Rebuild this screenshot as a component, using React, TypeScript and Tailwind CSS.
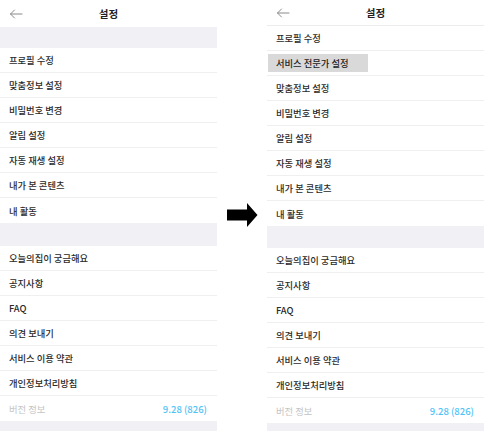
import React from "react";

const font = { fontFamily: '"Noto Sans CJK KR", "Noto Sans", sans-serif' };

function BackArrow() {
  return (
    <svg width="14" height="10" viewBox="0 0 14 10" fill="none">
      <path d="M13 5H1.5M5.5 1L1.5 5L5.5 9" stroke="#8a8a8a" strokeWidth="1" strokeLinecap="round" strokeLinejoin="round" />
    </svg>
  );
}

function Header({ border }: { border?: boolean }) {
  return (
    <div className={`grid grid-cols-[40px_1fr_40px] items-center ${border ? "h-[26px] border-b border-[#ececec]" : "h-[27px]"}`}>
      <div className="pl-[9px] pt-[1px] flex items-center">
        <BackArrow />
      </div>
      <div className="text-center text-[10.5px] font-bold text-[#222] pt-[1px]">설정</div>
      <div />
    </div>
  );
}

function Row({ label, last, highlight }: { label: string; last?: boolean; highlight?: boolean }) {
  return (
    <div className={`h-[25px] flex items-center ${last ? "" : "border-b border-[#efefef]"}`}>
      {highlight ? (
        <div className="ml-[1px] h-[18px] w-[100px] bg-[#d9d9d9] flex items-center pl-[8px] pt-[1px] text-[9.3px] font-medium text-[#222]">
          {label}
        </div>
      ) : (
        <div className="pl-[9px] pt-[2px] text-[9.3px] font-medium text-[#2a2a2a]">{label}</div>
      )}
    </div>
  );
}

function VersionRow() {
  return (
    <div className="h-[25px] flex items-center justify-between pl-[9px] pr-[10px] pt-[2px]">
      <span className="text-[9.3px] text-[#c4c4c4]">버전 정보</span>
      <span className="text-[9.5px] font-medium text-[#4fc3f7]">9.28 (826)</span>
    </div>
  );
}

const groupA = ["프로필 수정", "맞춤정보 설정", "비밀번호 변경", "알림 설정", "자동 재생 설정", "내가 본 콘텐츠", "내 활동"];
const groupB = ["오늘의집이 궁금해요", "공지사항", "FAQ", "의견 보내기", "서비스 이용 약관", "개인정보처리방침"];

function LeftPanel() {
  return (
    <div className="w-[217px] h-full flex flex-col bg-white">
      <Header />
      <div className="h-[21px] bg-[#f1f1f5]" />
      {groupA.map((l, i) => (
        <Row key={l} label={l} last={i === groupA.length - 1} />
      ))}
      <div className="h-[23px] bg-[#f1f1f5]" />
      {groupB.map((l) => (
        <Row key={l} label={l} />
      ))}
      <VersionRow />
      <div className="flex-1 bg-[#f1f1f5]" />
    </div>
  );
}

function RightPanel() {
  const items = ["프로필 수정", "서비스 전문가 설정", "맞춤정보 설정", "비밀번호 변경", "알림 설정", "자동 재생 설정", "내가 본 콘텐츠", "내 활동"];
  return (
    <div className="w-[217px] h-full flex flex-col bg-white">
      <Header border />
      {items.map((l, i) => (
        <Row key={l} label={l} highlight={i === 1} last={i === items.length - 1} />
      ))}
      <div className="h-[22px] bg-[#f1f1f5]" />
      {groupB.map((l) => (
        <Row key={l} label={l} />
      ))}
      <VersionRow />
      <div className="flex-1 bg-[#f1f1f5]" />
    </div>
  );
}

function BigArrow() {
  return (
    <svg width="31" height="24" viewBox="0 0 31 24">
      <path d="M0 6.5H20V0L30.5 12L20 24V17.5H0Z" fill="#000" />
    </svg>
  );
}

export default function App() {
  return (
    <div className="w-[484px] h-[431px] bg-white flex overflow-hidden" style={font}>
      <LeftPanel />
      <div className="w-[50px] flex items-center pl-[10px]">
        <div className="mt-[-2px]">
          <BigArrow />
        </div>
      </div>
      <RightPanel />
    </div>
  );
}
